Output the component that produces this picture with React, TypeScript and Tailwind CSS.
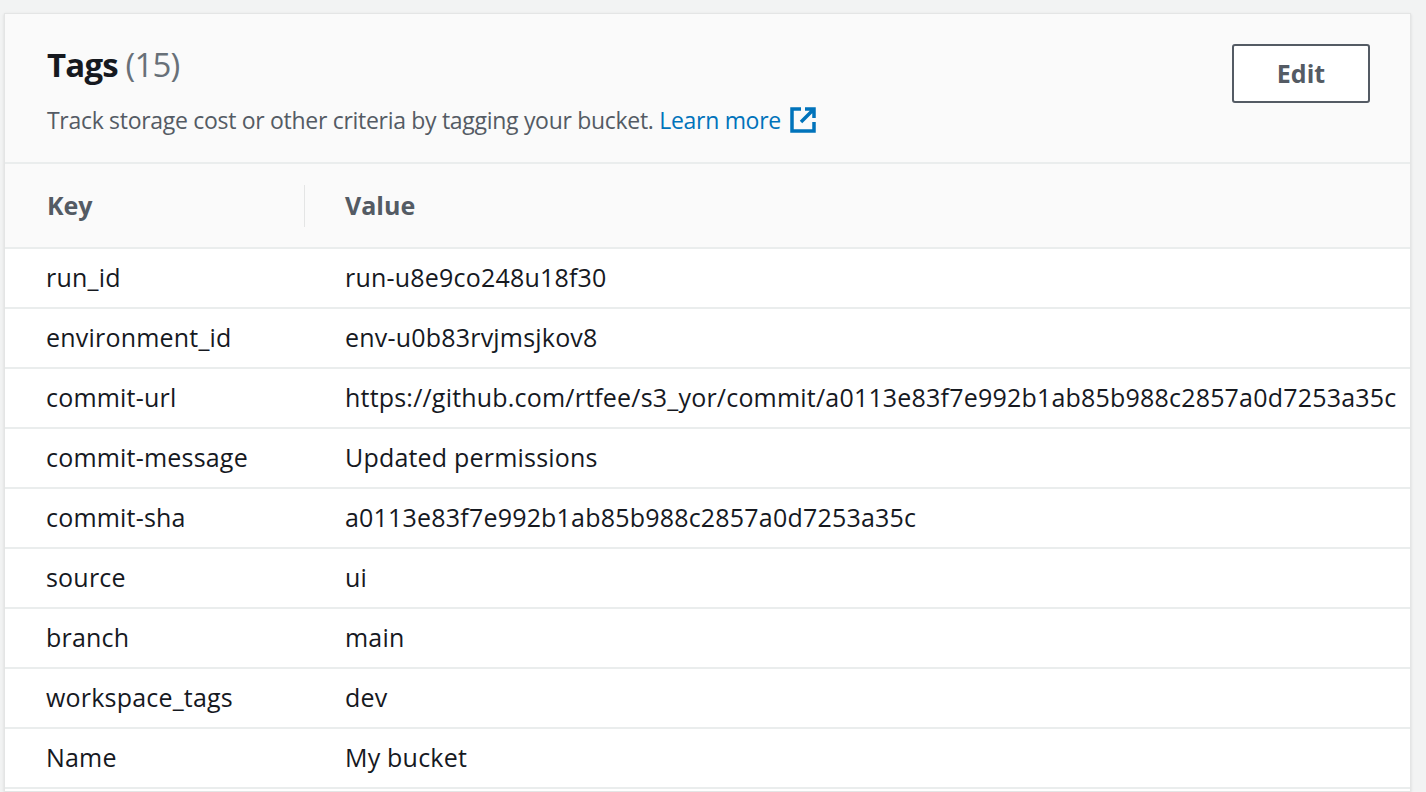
const rows: [string, string][] = [
  ["run_id", "run-u8e9co248u18f30"],
  ["environment_id", "env-u0b83rvjmsjkov8"],
  ["commit-url", "https://github.com/rtfee/s3_yor/commit/a0113e83f7e992b1ab85b988c2857a0d7253a35c"],
  ["commit-message", "Updated permissions"],
  ["commit-sha", "a0113e83f7e992b1ab85b988c2857a0d7253a35c"],
  ["source", "ui"],
  ["branch", "main"],
  ["workspace_tags", "dev"],
  ["Name", "My bucket"],
]

export default function App() {
  return (
    <div className="h-[792px] w-[1426px] overflow-hidden bg-[#f2f3f3] pl-[4px] pt-[13px] pr-[15px]" style={{ fontFamily: "'Open Sans', 'Liberation Sans', sans-serif" }}>
      <div className="h-full overflow-hidden border border-[#e4e5e5] bg-white text-[#16191f] shadow-sm">
        <div className="flex items-start justify-between bg-[#fafafa] border-b-2 border-[#eaeded] pl-[42px] pr-[40px] pt-[29px] h-[150px]">
          <div>
            <h2 className="text-[33px] leading-[44px] font-bold tracking-tight">
              Tags <span className="font-normal text-[#687078]">(15)</span>
            </h2>
            <p className="mt-[18px] text-[23px] leading-[30px] text-[#545b64] tracking-[-0.3px] flex items-center">
              Track storage cost or other criteria by tagging your bucket.&nbsp;
              <span className="text-[#0073bb]">Learn more</span>
              <svg className="ml-[8px]" width="28" height="28" viewBox="0 0 28 28" fill="none" stroke="#0073bb" strokeWidth="3.5">
                <path d="M12 3H3v22h22v-9" />
                <path d="M16 3h9v9M25 3L12 16" />
              </svg>
            </p>
          </div>
          <button className="mt-[1px] h-[59px] w-[138px] rounded-[3px] border-2 border-[#545b64] bg-white text-[25px] font-bold text-[#545b64]">
            Edit
          </button>
        </div>
        <div className="flex h-[85px] items-center bg-[#fafafa] border-b-2 border-[#eaeded] text-[25px] font-bold text-[#545b64]">
          <div className="w-[300px] pl-[42px] border-r border-[#e4e5e5] h-[42px] flex items-center">Key</div>
          <div className="pl-[40px]">Value</div>
        </div>
        {rows.map(([k, v]) => (
          <div key={k} className="flex h-[60px] items-center border-b-2 border-[#eaeded] text-[25px] tracking-[0.2px] whitespace-nowrap">
            <div className="w-[300px] shrink-0 pl-[41px]">{k}</div>
            <div className="pl-[40px]">{v}</div>
          </div>
        ))}
      </div>
    </div>
  )
}
